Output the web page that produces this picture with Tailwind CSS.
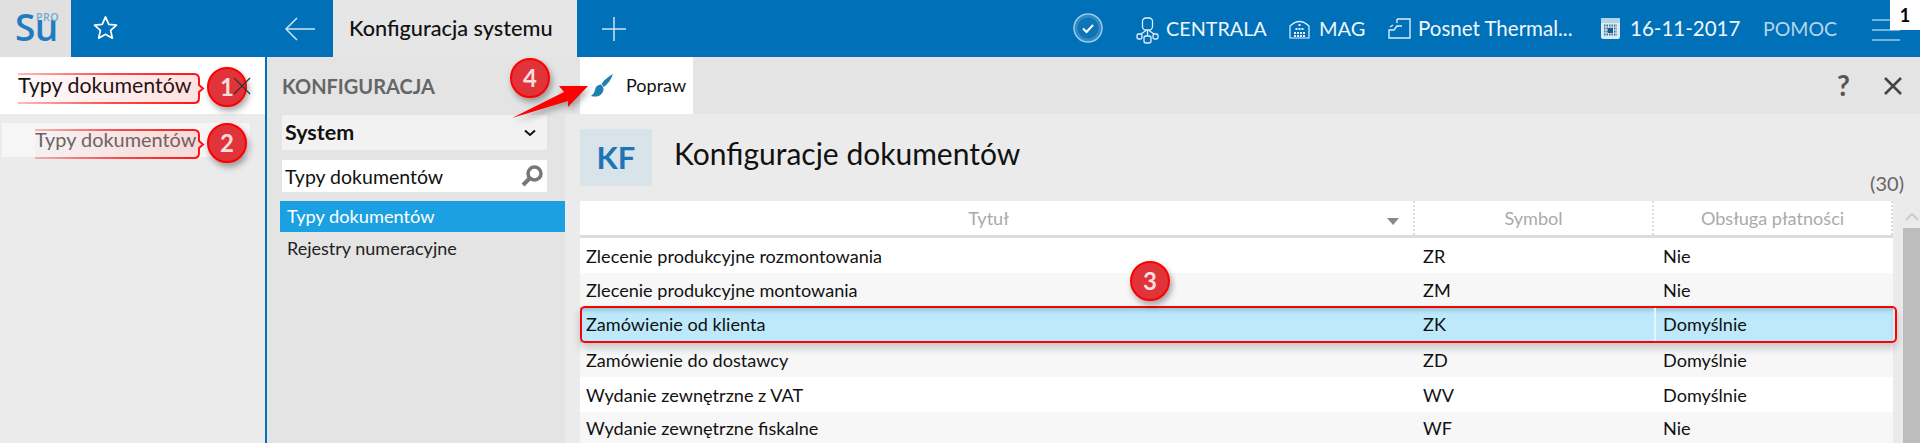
<!DOCTYPE html>
<html lang="pl">
<head>
    <meta charset="UTF-8">
    <title>Konfiguracja systemu</title>
    <script src="https://cdn.jsdelivr.net/npm/@tailwindcss/browser@4"></script>
</head>
<body class="bg-[#ebebeb] font-['Lato','Open_Sans',sans-serif] text-[#111]">
<div class="relative w-[1920px] h-[443px] overflow-hidden">

    <!-- Top bar -->
    <header class="flex h-[57px] bg-[#0070b8] text-white items-stretch">
        <div class="relative w-[71px] bg-[#e0e0e0] shrink-0 font-['Open_Sans',sans-serif]">
            <span class="absolute left-[15px] top-[9px] text-[37px] leading-[36px] font-semibold tracking-[-0.5px] text-[#1f7dbf]">Su</span>
            <span class="absolute left-[36px] top-[12px] text-[10.500px] leading-[11px] font-semibold tracking-[0.6px] text-[#6ea8d0]">PRO</span>
        </div>
        <div class="w-[262px] shrink-0 flex items-center pl-[21px] gap-[173px]">
            <svg width="27" height="27" viewBox="0 0 28 28" fill="none" stroke="white" stroke-width="1.8"><path d="M14 2l3.400 7.800 8 .8-6.100 5.400 1.800 8L14 20l-7.100 4 1.800-8-6.100-5.400 8-.8z" stroke-linejoin="round"/></svg>
            <svg width="32" height="26" viewBox="0 0 32 26" fill="none" stroke="#cfe3f1" stroke-width="1.500" class="shrink-0 -ml-[8px]"><path d="M31 13H2M13 2L2 13l11 11"/></svg>
        </div>
        <div class="w-[244px] shrink-0 bg-[#e6e6e6] text-[#111] flex items-center pl-[16px] text-[21.700px] font-medium">Konfiguracja systemu</div>
        <div class="w-[74px] flex items-center justify-center shrink-0">
            <svg width="26" height="26" viewBox="0 0 26 26" stroke="#cfe3f1" stroke-width="1.500"><path d="M13 1v24M1 13h24"/></svg>
        </div>
        <div class="flex-1 relative text-[20.500px] text-[#eef7fc]">
            <!-- status icons and labels -->
            <svg width="30" height="30" viewBox="0 0 30 30" fill="none" class="absolute left-[422px] top-[13px]"><circle cx="15" cy="15" r="14" fill="#2f8ac6" stroke="#9cc8e6" stroke-width="1.500"/><circle cx="15" cy="15" r="10.500" fill="#0e74b8"/><path d="M10 15.500l3.500 3.500 6.500-7" stroke="white" stroke-width="2"/></svg>
            <svg width="23" height="28" viewBox="0 0 23 28" fill="none" stroke="#e4f1fa" stroke-width="1.300" class="absolute left-[485px] top-[17px]"><rect x="6.500" y="1" width="10" height="12" rx="3.500"/><path d="M11.500 13v6M10 13.500L5 17M13 13.500l5 3.500"/><rect x="1" y="17" width="5" height="5" rx="1.500"/><rect x="8" y="19" width="7" height="7" rx="2"/><rect x="17" y="17" width="5" height="5" rx="1.500"/></svg>
            <span class="absolute left-[515px] top-[15px] leading-[27px] text-[19.800px]">CENTRALA</span>
            <svg width="21" height="20" viewBox="0 0 21 20" fill="none" stroke="#e4f1fa" stroke-width="1.200" class="absolute left-[638px] top-[19px]"><path d="M1 19V7Q10.500-2 20 7V19z"/><path d="M9.500 6h2M6.500 10h2M9.500 10h2M12.500 10h2M5 14h11M5 17h11" stroke-width="1.800" stroke-dasharray="2 1"/></svg>
            <span class="absolute left-[668px] top-[15px] leading-[27px] text-[20px]">MAG</span>
            <svg width="23" height="21" viewBox="0 0 23 21" fill="none" stroke="#dcedf8" stroke-width="1.400" class="absolute left-[737px] top-[18px]"><path d="M9 1H22V20H1V12H6L9 8H14M9 1V5"/><path d="M2 9l3-2"/></svg>
            <span class="absolute left-[767px] top-[15px] leading-[27px]">Posnet Thermal...</span>
            <svg width="19" height="21" viewBox="0 0 19 21" class="absolute left-[950px] top-[18px]"><rect width="19" height="21" rx="2" fill="#dbeaf5"/><rect width="19" height="5" fill="#b4d3e9"/><path d="M3 7.500h13M3 10.500h13M3 13.500h13M3 16.500h13" stroke="#3b7199" stroke-width="2" stroke-dasharray="1.500 1"/><rect x="7" y="10" width="5" height="5" fill="#1e5c8a"/></svg>
            <span class="absolute left-[979px] top-[15px] leading-[27px]">16-11-2017</span>
            <span class="absolute left-[1112px] top-[15px] leading-[27px] text-[19.500px] text-[#b5d6ec]">POMOC</span>
            <svg width="30" height="24" viewBox="0 0 30 24" stroke="#9cc8e6" stroke-width="1.500" class="absolute left-[1220px] top-[18px]"><path d="M1 2h28M1 12h28M1 22h28"/></svg>
        </div>
    </header>

    <div class="flex h-[386px]">
        <!-- Left search panel -->
        <aside class="w-[267px] shrink-0 border-r-2 border-[#0070b8] bg-[#ebebeb]">
            <div class="h-[57px] bg-white flex items-center pl-[18px] text-[21.400px]">Typy dokumentów</div>
            <div class="mt-[9px] ml-[2px] w-[248px] h-[34px] bg-[#f6f6f6] flex items-center pl-[33px] text-[19.900px] text-[#666]">Typy dokumentów</div>
        </aside>

        <!-- Configuration column -->
        <nav class="w-[298px] shrink-0 bg-[#e4e4e4]">
            <div class="h-[58px] flex items-center pl-[15px] text-[20px] font-bold text-[#666]">KONFIGURACJA</div>
            <div class="ml-[15px] w-[265px] h-[35px] bg-[#f2f2f2] flex items-center justify-between pl-[3px] pr-[11px] text-[21.500px] font-bold">
                System
                <svg width="12" height="8" viewBox="0 0 12 8" fill="none" stroke="#111" stroke-width="2"><path d="M1 1.500l5 4.500 5-4.500"/></svg>
            </div>
            <div class="mt-[10px] ml-[15px] w-[265px] h-[32px] bg-white flex items-center justify-between pl-[3px] pr-[3px] text-[19.500px] pt-[2px]">
                Typy dokumentów
                <svg width="24" height="24" viewBox="0 0 24 24" fill="none" stroke="#777" class="shrink-0 -mt-[2px]"><circle cx="14.500" cy="9.500" r="6.500" stroke-width="3.500"/><path d="M9.500 14.500L3 21" stroke-width="4"/></svg>
            </div>
            <div class="mt-[9px] ml-[13px] h-[31px] bg-[#1ba1e2] text-white flex items-center pl-[7px] text-[18.200px]">Typy dokumentów</div>
            <div class="ml-[13px] h-[32px] flex items-center pl-[7px] text-[18px] text-[#222]">Rejestry numeracyjne</div>
        </nav>

        <!-- Main -->
        <main class="flex-1 min-w-0 bg-[#ebebeb]">
            <div class="h-[57px] bg-[#e4e4e4] pl-[15px] flex items-stretch">
                <div class="w-[113px] bg-white flex items-center">
                    <svg width="23" height="23" viewBox="0 0 23 23" class="ml-[11px] shrink-0 -mt-[1px]"><path d="M22 0c-4 2-8 5-11.500 10l2.500 3c3.500-3 7-7 9-13z" fill="#1f7fb0"/><path d="M9.500 10.500C6 11 4.500 13 4 16c-.3 2-1.500 4-4 6 6 1.500 11 0 12.500-6 .3-2-.8-4.500-3-5.500z" fill="#1f7fb0"/></svg>
                    <span class="ml-[12px] text-[18px]">Popraw</span>
                </div>
                <div class="flex-1 relative">
                    <span class="absolute left-[1144px] top-[10px] text-[28px] leading-[36px] font-bold text-[#555]">?</span>
                    <svg width="20" height="20" viewBox="0 0 20 20" stroke="#444" stroke-width="2.500" class="absolute left-[1190px] top-[19px]"><path d="M2 2l16 16M18 2L2 18"/></svg>
                </div>
            </div>

            <div class="relative h-[87px] pl-[15px] pt-[15px]">
                <div class="flex items-start">
                    <div class="w-[72px] h-[57px] bg-[#d9e3ea] flex items-center justify-center text-[#1f74b5] text-[31px] font-bold">KF</div>
                    <h1 class="ml-[22px] mt-[6px] text-[30px] leading-[36px] font-normal">Konfiguracje dokumentów</h1>
                </div>
                <span class="absolute right-[16px] top-[57px] text-[20px] leading-[24px] text-[#666]">(30)</span>
            </div>

            <!-- Table -->
            <div class="relative ml-[15px] flex">
                <div class="w-[1313px] shrink-0 text-[18.100px]">
                    <div class="grid grid-cols-[835px_239px_239px] h-[37px] bg-white text-[#aaa] border-b-[3px] border-[#dcdcdc]">
                        <div class="relative flex items-center justify-center pr-[16px] pt-[2px] border-r-2 border-dotted border-[#ddd]">Tytuł
                            <span class="absolute right-[14px] top-[17px] w-0 h-0 border-x-[6px] border-x-transparent border-t-[7px] border-t-[#888]"></span>
                        </div>
                        <div class="flex items-center justify-center pt-[2px] border-r-2 border-dotted border-[#ddd]">Symbol</div>
                        <div class="flex items-center justify-center pt-[2px] border-r-2 border-dotted border-[#ddd]">Obsługa płatności</div>
                    </div>
                    <div class="grid grid-cols-[835px_239px_239px] h-[35px] pt-[3px] items-center bg-white"><span class="pl-[6px]">Zlecenie produkcyjne rozmontowania</span><span class="pl-[8px]">ZR</span><span class="pl-[9px]">Nie</span></div>
                    <div class="grid grid-cols-[835px_239px_239px] h-[34px] pt-[2px] items-center bg-[#f7f7f7]"><span class="pl-[6px]">Zlecenie produkcyjne montowania</span><span class="pl-[8px]">ZM</span><span class="pl-[9px]">Nie</span></div>
                    <div class="grid grid-cols-[835px_239px_239px] h-[36px] items-center bg-[#bde9fb] shadow-[inset_0_5px_5px_-2px_rgba(0,60,100,0.25)]"><span class="pl-[6px]">Zamówienie od klienta</span><span class="pl-[8px]">ZK</span><span class="pl-[7px] h-full flex items-center border-l-2 border-[#e4f6fd]">Domyślnie</span></div>
                    <div class="grid grid-cols-[835px_239px_239px] h-[34px] pt-[1px] items-center bg-[#f7f7f7]"><span class="pl-[6px]">Zamówienie do dostawcy</span><span class="pl-[8px]">ZD</span><span class="pl-[9px]">Domyślnie</span></div>
                    <div class="grid grid-cols-[835px_239px_239px] h-[35px] pt-[2px] items-center bg-white"><span class="pl-[6px]">Wydanie zewnętrzne z VAT</span><span class="pl-[8px]">WV</span><span class="pl-[9px]">Domyślnie</span></div>
                    <div class="grid grid-cols-[835px_239px_239px] h-[32px] pt-[1px] items-center bg-[#f7f7f7]"><span class="pl-[6px]">Wydanie zewnętrzne fiskalne</span><span class="pl-[8px]">WF</span><span class="pl-[9px]">Nie</span></div>
                </div>
                <!-- Scrollbar -->
                <div class="ml-[10px] w-[17px] h-[242px] relative">
                    <svg width="14" height="9" viewBox="0 0 14 9" fill="none" stroke="#ccc" stroke-width="2" class="absolute left-[2px] top-[11px]"><path d="M1 8l6-6 6 6"/></svg>
                    <div class="absolute top-[27px] inset-x-0 bottom-0 bg-[#bdbdbd]"></div>
                </div>
            </div>
        </main>
    </div>

    <!-- Tutorial annotations -->
    <svg width="190" height="33" viewBox="0 0 190 33" fill="none" class="absolute left-[18px] top-[72px]">
        <defs><linearGradient id="fade1"><stop offset="0" stop-color="#f22" stop-opacity="0.3"/><stop offset="0.5" stop-color="#f22" stop-opacity="0.8"/><stop offset="1" stop-color="#f11"/></linearGradient>
        <linearGradient id="tint1"><stop offset="0" stop-color="#f22" stop-opacity="0.02"/><stop offset="1" stop-color="#f22" stop-opacity="0.14"/></linearGradient></defs>
        <path d="M0 2H176q5 0 5 5V13l4 3.500-4 3.500V26q0 5-5 5H0" fill="url(#tint1)" stroke="url(#fade1)" stroke-width="2"/>
    </svg>
    <svg width="173" height="33" viewBox="0 0 173 33" fill="none" class="absolute left-[35px] top-[128px]">
        <defs><linearGradient id="fade2"><stop offset="0" stop-color="#f22" stop-opacity="0.3"/><stop offset="0.5" stop-color="#f22" stop-opacity="0.8"/><stop offset="1" stop-color="#f11"/></linearGradient>
        <linearGradient id="tint2"><stop offset="0" stop-color="#f22" stop-opacity="0.02"/><stop offset="1" stop-color="#f22" stop-opacity="0.14"/></linearGradient></defs>
        <path d="M0 2H159q5 0 5 5V13l4 3.500-4 3.500V25q0 5-5 5H0" fill="url(#tint2)" stroke="url(#fade2)" stroke-width="2"/>
    </svg>
    <div class="absolute left-[580px] top-[306px] w-[1317px] h-[37px] border-2 border-[#f00] rounded-[5px] shadow-[0_5px_8px_rgba(0,0,0,0.2)]"></div>
    <svg width="90" height="44" viewBox="0 0 90 44" class="absolute left-[506px] top-[80px] drop-shadow-[2px_4px_3px_rgba(0,0,0,0.3)]"><path d="M6 38L58 12l-5-6h29L62 27v-6z" fill="#f00"/></svg>
    <div class="absolute left-[207px] top-[67px] w-[40px] h-[40px] rounded-full bg-[#e0333a] border-2 border-[#f00] text-[#f8dede] flex items-center justify-center text-[24px] font-bold shadow-[2px_4px_6px_rgba(0,0,0,0.35)]">1</div>
    <svg width="20" height="20" viewBox="0 0 20 20" stroke="#333" stroke-width="1.200" class="absolute left-[232px] top-[76px]"><path d="M2 2l16 16M18 2L2 18"/></svg>
    <div class="absolute left-[207px] top-[123px] w-[40px] h-[40px] rounded-full bg-[#e0333a] border-2 border-[#f00] text-[#f8dede] flex items-center justify-center text-[24px] font-bold shadow-[2px_4px_6px_rgba(0,0,0,0.35)]">2</div>
    <div class="absolute left-[1130px] top-[261px] w-[40px] h-[40px] rounded-full bg-[#e0333a] border-2 border-[#f00] text-[#f8dede] flex items-center justify-center text-[24px] font-bold shadow-[2px_4px_6px_rgba(0,0,0,0.35)]">3</div>
    <div class="absolute left-[510px] top-[58px] w-[40px] h-[40px] rounded-full bg-[#e0333a] border-2 border-[#f00] text-[#f8dede] flex items-center justify-center text-[24px] font-bold shadow-[2px_4px_6px_rgba(0,0,0,0.35)]">4</div>
    <div class="absolute right-0 top-0 w-[30px] h-[30px] bg-white text-black flex items-center justify-center text-[18px] font-bold">1</div>
</div>
</body>
</html>
